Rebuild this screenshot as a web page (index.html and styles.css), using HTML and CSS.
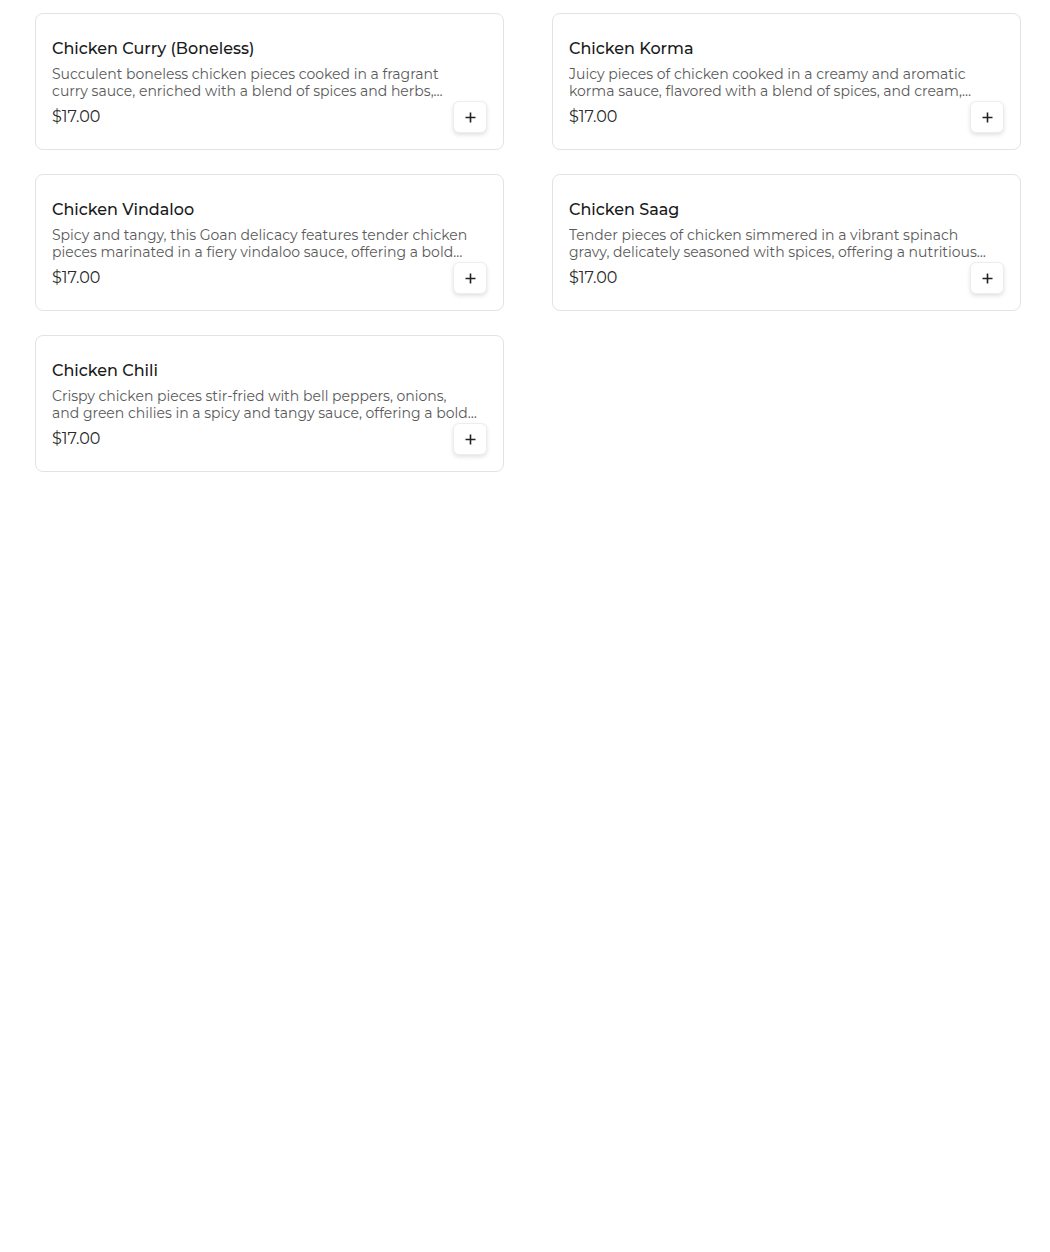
FILE: index.html
```html
<!DOCTYPE html>
<html lang="en">
<head>
<meta charset="UTF-8">
<meta name="viewport" content="width=device-width, initial-scale=1.0">
<title>Menu - Chicken</title>
<link rel="stylesheet" href="styles.css">
</head>
<body>

<div class="menu-grid">
    <div class="menu-card">
        <h3 class="item-name">Chicken Curry (Boneless)</h3>
        <p class="item-desc">Succulent boneless chicken pieces cooked in a fragrant curry sauce, enriched with a blend of spices and herbs, offering a comforting and flavorful dish.</p>
        <div class="item-footer">
            <span class="item-price">$17.00</span>
            <button class="add-btn" aria-label="Add"><svg width="11" height="11" viewBox="0 0 11 11"><path d="M5.5 0.5v10M0.5 5.5h10" stroke="#222" stroke-width="1.6" fill="none"/></svg></button>
        </div>
    </div>
    <div class="menu-card">
        <h3 class="item-name">Chicken Korma</h3>
        <p class="item-desc">Juicy pieces of chicken cooked in a creamy and aromatic korma sauce, flavored with a blend of spices, and cream, creating a rich and indulgent dish.</p>
        <div class="item-footer">
            <span class="item-price">$17.00</span>
            <button class="add-btn" aria-label="Add"><svg width="11" height="11" viewBox="0 0 11 11"><path d="M5.5 0.5v10M0.5 5.5h10" stroke="#222" stroke-width="1.6" fill="none"/></svg></button>
        </div>
    </div>
    <div class="menu-card">
        <h3 class="item-name">Chicken Vindaloo</h3>
        <p class="item-desc">Spicy and tangy, this Goan delicacy features tender chicken pieces marinated in a fiery vindaloo sauce, offering a bold and intense flavor.</p>
        <div class="item-footer">
            <span class="item-price">$17.00</span>
            <button class="add-btn" aria-label="Add"><svg width="11" height="11" viewBox="0 0 11 11"><path d="M5.5 0.5v10M0.5 5.5h10" stroke="#222" stroke-width="1.6" fill="none"/></svg></button>
        </div>
    </div>
    <div class="menu-card">
        <h3 class="item-name">Chicken Saag</h3>
        <p class="item-desc">Tender pieces of chicken simmered in a vibrant spinach gravy, delicately seasoned with spices, offering a nutritious and flavorful dish.</p>
        <div class="item-footer">
            <span class="item-price">$17.00</span>
            <button class="add-btn" aria-label="Add"><svg width="11" height="11" viewBox="0 0 11 11"><path d="M5.5 0.5v10M0.5 5.5h10" stroke="#222" stroke-width="1.6" fill="none"/></svg></button>
        </div>
    </div>
    <div class="menu-card">
        <h3 class="item-name">Chicken Chili</h3>
        <p class="item-desc">Crispy chicken pieces stir-fried with bell peppers, onions,<br>and green chilies in a spicy and tangy sauce, offering a bold and zesty flavor.</p>
        <div class="item-footer">
            <span class="item-price">$17.00</span>
            <button class="add-btn" aria-label="Add"><svg width="11" height="11" viewBox="0 0 11 11"><path d="M5.5 0.5v10M0.5 5.5h10" stroke="#222" stroke-width="1.6" fill="none"/></svg></button>
        </div>
    </div>
</div>

</body>
</html>
```

FILE: styles.css
```css
body {
    margin: 0;
    font-family: "Montserrat", Inter, "Open Sans", sans-serif;
    background-color: #fff;
    color: #1f1f1f;
}

.menu-grid {
    display: grid;
    grid-template-columns: 469px 469px;
    column-gap: 48px;
    row-gap: 24px;
    padding: 13px 0 0 35px;
}

.menu-card {
    border: 1px solid #e3e3e3;
    border-radius: 8px;
    padding: 23px 16px 16px 16px;
    background-color: #fff;
}

.item-name {
    margin: 0 0 5px 0;
    font-size: 16px;
    font-weight: 500;
    line-height: 24px;
    color: #1a1a1a;
}

.item-desc {
    margin: 0 0 1px 0;
    max-width: 426px;
    font-size: 14px;
    line-height: 17px;
    color: #5a5a5a;
    display: -webkit-box;
    -webkit-line-clamp: 2;
    -webkit-box-orient: vertical;
    overflow: hidden;
}

.item-footer {
    display: flex;
    justify-content: space-between;
    align-items: center;
}

.item-price {
    font-size: 16px;
    line-height: 24px;
    color: #2a2a2a;
}

.add-btn {
    width: 34px;
    height: 32px;
    padding: 0;
    display: flex;
    align-items: center;
    justify-content: center;
    background-color: #fff;
    border: 1px solid #ededed;
    border-radius: 6px;
    box-shadow: 0 2px 4px rgba(0, 0, 0, 0.12);
    cursor: pointer;
}
```
